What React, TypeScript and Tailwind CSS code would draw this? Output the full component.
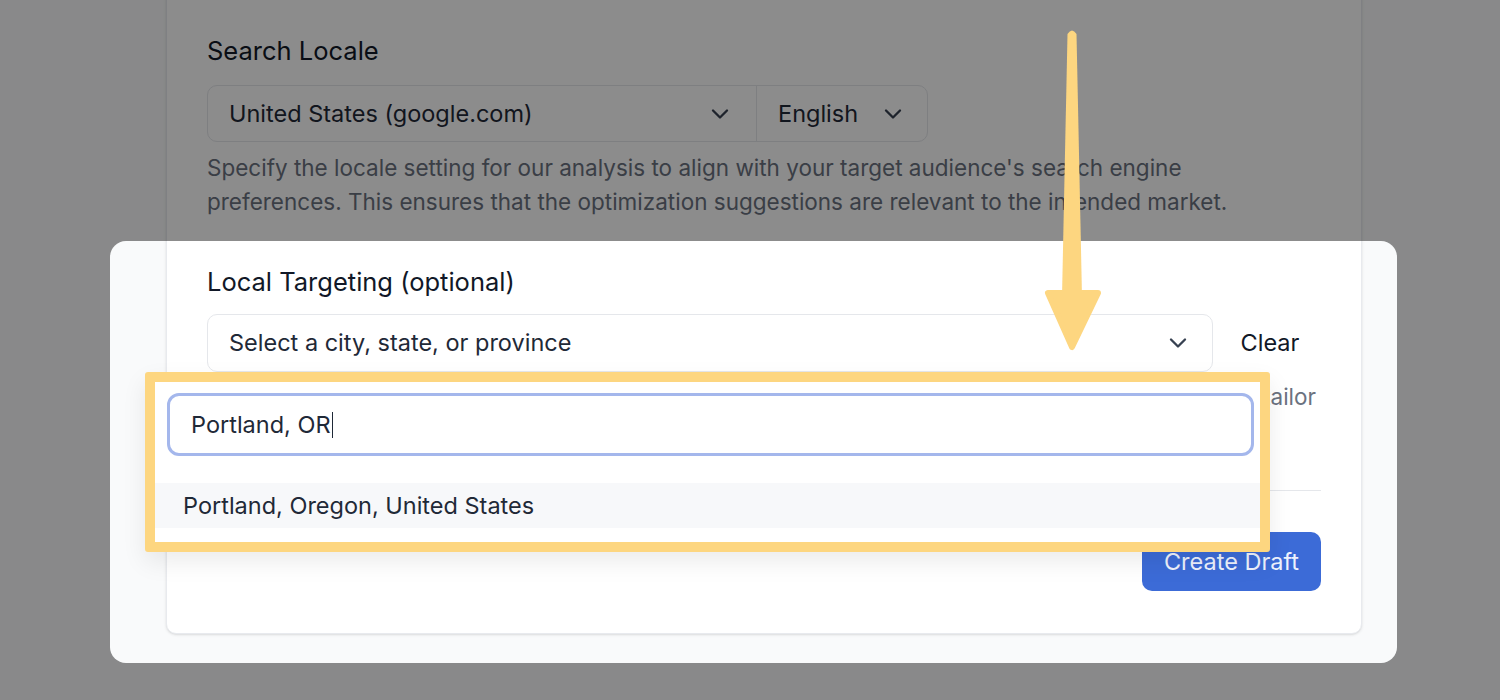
import React from 'react';
import { ChevronDown } from 'lucide-react';

const Arrow: React.FC = () => (
  <svg
    className="absolute left-[1040px] top-[25px] pointer-events-none"
    width="66"
    height="330"
    viewBox="0 0 66 330"
  >
    <path d="M27.5 9 Q32 2 36.5 9 L42 272 L22 272 Z" fill="#fdd680" />
    <polygon
      points="8,268 58,268 32,322"
      fill="#fdd680"
      stroke="#fdd680"
      strokeWidth="6"
      strokeLinejoin="round"
    />
  </svg>
);

const App: React.FC = () => {
  return (
    <div className="relative w-[1500px] h-[700px] overflow-hidden bg-[#f9fafb] font-['Inter',sans-serif] text-[#1f2937]">
      {/* settings card */}
      <div className="ml-[166px] mt-[-20px] w-[1196px] rounded-[10px] border border-[#e8eaee] bg-white px-10 pt-[52px] pb-[42px] shadow-sm">
        <div className="text-[25.5px] leading-[36px] text-[#111827]">Search Locale</div>
        <div className="mt-4 flex h-[57px] w-[721px] rounded-[10px] border border-[#e5e7eb]">
          <div className="flex w-[549px] items-center justify-between border-r border-[#e5e7eb] pl-[21px] pr-[22px]">
            <span className="text-[23.5px]">United States (google.com)</span>
            <ChevronDown className="h-7 w-7 text-[#374151]" strokeWidth={2} />
          </div>
          <div className="flex flex-1 items-center justify-between pl-[21px] pr-[20px]">
            <span className="text-[23.5px]">English</span>
            <ChevronDown className="h-7 w-7 text-[#374151]" strokeWidth={2} />
          </div>
        </div>
        <p className="mt-[9px] text-[22.5px] leading-[34px] text-[#6b7280]">
          Specify the locale setting for our analysis to align with your target audience's search engine
          <br />
          preferences. This ensures that the optimization suggestions are relevant to the intended market.
        </p>

        <div className="mt-[45px] text-[25.5px] leading-[36px] text-[#111827]">Local Targeting (optional)</div>
        <div className="mt-[14px] flex items-center">
          <div className="flex h-[58px] flex-1 items-center justify-between rounded-[10px] border border-[#e5e7eb] pl-[21px] pr-[20px]">
            <span className="text-[23.5px]">Select a city, state, or province</span>
            <ChevronDown className="h-7 w-7 text-[#374151]" strokeWidth={2} />
          </div>
          <button className="w-[108px] pl-[6px] text-center text-[23.5px] text-[#111827]">Clear</button>
        </div>
        <div className="mt-[8px] text-[22.5px] leading-[34px] text-[#6b7280]">
          <div className="flex justify-end overflow-hidden whitespace-nowrap pr-[5px]">
            <span>
              Optionally choose a city, state, or province to focus our analysis on local search results and tailor
            </span>
          </div>
          <div>the recommendations to your audience in that area.</div>
        </div>

        <div className="mt-[42px] border-t border-[#e5e7eb]" />
        <div className="mt-[41px] flex justify-end">
          <button className="h-[59px] w-[179px] rounded-[10px] bg-[#3c6bd7] text-[23.5px] text-[#eef2fd]">
            Create Draft
          </button>
        </div>
      </div>

      {/* spotlight overlay */}
      <div className="pointer-events-none absolute left-[110px] top-[241px] h-[422px] w-[1287px] rounded-[16px] shadow-[0_0_0_2000px_rgba(0,0,0,0.45)]" />

      {/* open dropdown, outlined */}
      <div className="absolute left-[145px] top-[372px] w-[1125px] rounded-[3px] border-[10px] border-[#fdd680] bg-white shadow-[0_10px_25px_rgba(0,0,0,0.08)]">
        <div className="pl-[12px] pr-[6px] pt-[11px]">
          <div className="flex h-[63px] items-center rounded-[12px] border-[3px] border-[#a4b7ec] pl-[21px]">
            <span className="text-[23.5px] text-[#1f2937]">Portland, OR</span>
            <span className="ml-[1px] h-[26px] w-[1.5px] bg-[#1f2937]" />
          </div>
        </div>
        <div className="mt-[27px] mb-[14px] flex h-[45px] items-center bg-[#f7f8fa] pl-[28px] text-[23.5px] text-[#1f2937]">
          Portland, Oregon, United States
        </div>
      </div>

      <Arrow />
    </div>
  );
};

export default App;
